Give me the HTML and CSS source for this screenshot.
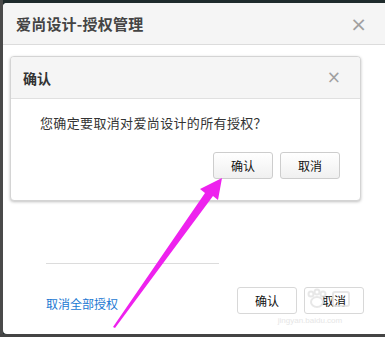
FILE: index.html
```html
<!DOCTYPE html>
<html lang="zh">
<head>
<meta charset="utf-8">
<link rel="stylesheet" href="styles.css">
</head>
<body>
<div class="page">
  <div class="dialog">
    <div class="dlg-head">
      <span class="dlg-title">爱尚设计-授权管理</span>
      <span class="close">×</span>
    </div>
    <div class="dlg-body">
      <div class="confirm">
        <div class="cf-head">
          <span class="cf-title">确认</span>
          <span class="close small">×</span>
        </div>
        <div class="cf-body">
          <p class="cf-text">您确定要取消对爱尚设计的所有授权？</p>
          <div class="btns">
            <button class="btn">确认</button>
            <button class="btn">取消</button>
          </div>
        </div>
      </div>
      <div class="divider"></div>
      <div class="footer">
        <a class="link">取消全部授权</a>
        <div class="btns">
          <button class="btn">确认</button>
          <button class="btn">取消</button>
        </div>
      </div>
    </div>
  </div>
  <div class="watermark">
    <svg class="wm-logo" width="90" height="22" viewBox="0 0 90 22">
      <g fill="none" stroke="#e2e2e2" stroke-width="2">
        <circle cx="46" cy="6" r="2.5"/>
        <circle cx="52" cy="4" r="2.5"/>
        <circle cx="58" cy="6" r="2.5"/>
        <ellipse cx="52" cy="14" rx="6" ry="5"/>
        <rect x="68" y="4" width="16" height="14" rx="2"/>
      </g>
    </svg>
    <span class="wm-url">jingyan.baidu.com</span>
  </div>
  <svg class="arrow" width="385" height="337" viewBox="0 0 385 337">
    <polygon points="113,327 205,193 200,189 222,178 218,200 213,196 115,328" fill="#ee22ee"/>
  </svg>
</div>
</body>
</html>
```

FILE: styles.css
```css
html, body {
  margin: 0;
  padding: 0;
}
body {
  width: 385px;
  height: 337px;
  overflow: hidden;
  background: #3a3a3a;
  font-family: "Noto Sans CJK SC", "Liberation Sans", sans-serif;
}
.page {
  position: relative;
  width: 385px;
  height: 337px;
  background: linear-gradient(90deg, #4a4a4a 0 3px, #1f2b2c 3px);
  overflow: hidden;
}
.page::after {
  content: "";
  position: absolute;
  left: 0;
  right: 0;
  bottom: 0;
  height: 3px;
  background: #444;
}
.dialog {
  position: relative;
  top: 3px;
  left: 3px;
  width: 392px;
  height: 331px;
  background: #fff;
  border-radius: 4px;
  overflow: hidden;
}
.dlg-head {
  height: 41px;
  background: #f5f5f5;
  border-bottom: 1px solid #dcdcdc;
  display: flex;
  align-items: center;
  justify-content: space-between;
  padding: 0 28px 0 13px;
}
.dlg-title {
  font-size: 15px;
  font-weight: bold;
  color: #444;
  letter-spacing: 0.2px;
}
.close {
  font-family: "DejaVu Sans", sans-serif;
  font-size: 20px;
  color: #a0a0a0;
  line-height: 1;
}
.close.small {
  font-size: 17px;
}
.dlg-body {
  padding: 11px 0 0 7px;
}
.confirm {
  width: 349px;
  border: 1px solid #d4d4d4;
  border-radius: 4px;
  box-shadow: 0 1px 3px rgba(0,0,0,0.25);
  overflow: hidden;
  background: #fff;
}
.cf-head {
  height: 41px;
  background: #f5f5f5;
  border-bottom: 1px solid #e0e0e0;
  display: flex;
  align-items: center;
  justify-content: space-between;
  padding: 0 19px 0 12px;
}
.cf-title {
  font-size: 14px;
  font-weight: bold;
  color: #333;
}
.cf-body {
  padding: 14px 20px 21px 29px;
}
.cf-text {
  margin: 0;
  font-size: 13px;
  letter-spacing: 0.35px;
  color: #333;
  line-height: 20px;
}
.btns {
  display: flex;
  justify-content: flex-end;
  gap: 7px;
}
.cf-body .btns {
  margin-top: 19px;
}
.btn {
  width: 60px;
  height: 27px;
  border: 1px solid #cdcdcd;
  border-radius: 3px;
  background: linear-gradient(#ffffff, #f0f0f0);
  font-family: "Noto Sans CJK SC", sans-serif;
  font-size: 12px;
  color: #111;
  padding: 0;
}
.divider {
  margin: 62px 0 0 36px;
  width: 173px;
  height: 1px;
  background: #dcdcdc;
}
.footer {
  margin-top: 23px;
  display: flex;
  align-items: center;
  justify-content: space-between;
  padding: 0 31px 0 36px;
}
.link {
  font-size: 12px;
  color: #1a78d2;
  margin-top: 5px;
}
.footer .btn {
  background: #fff;
  border-color: #d8d8d8;
}
.watermark {
  position: absolute;
  left: 265px;
  top: 288px;
  display: flex;
  flex-direction: column;
  align-items: center;
  pointer-events: none;
}
.wm-logo {
  opacity: 0.8;
}
.wm-url {
  font-family: "Liberation Sans", sans-serif;
  font-size: 8px;
  line-height: 10px;
  margin-top: 6px;
  color: #e6e6e6;
}
.arrow {
  position: absolute;
  left: 0;
  top: 0;
}
```
